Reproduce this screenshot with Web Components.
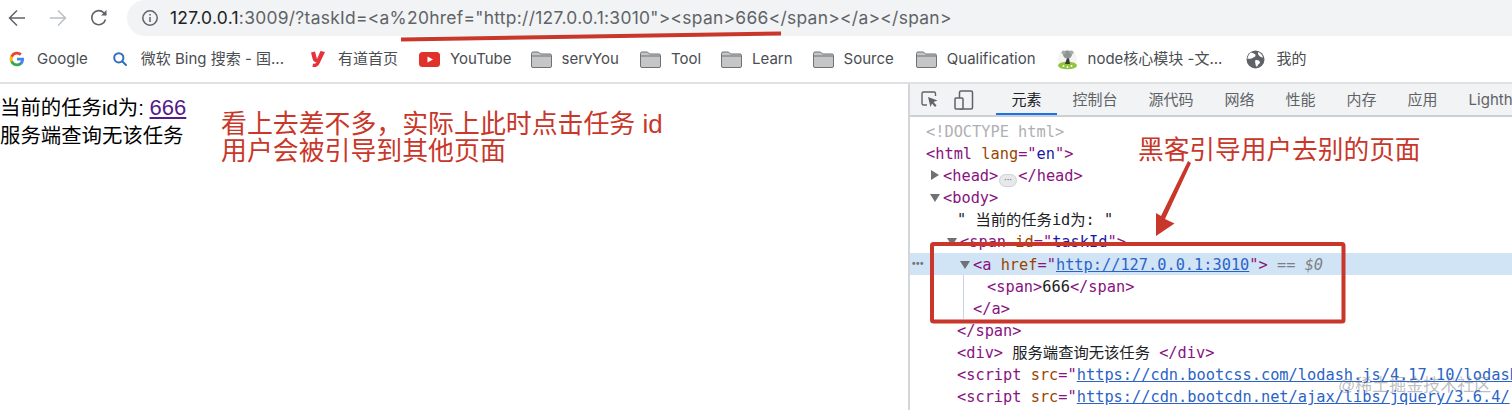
<!DOCTYPE html>
<html lang="zh-CN"><head><meta charset="utf-8"><title>XSS</title>
<style>
html,body{margin:0;padding:0;background:#fff}
body{width:1512px;height:410px;overflow:hidden;font-family:"Liberation Sans","Noto Sans CJK SC",sans-serif}
</style></head><body>
<screen-shot>
  <browser-toolbar></browser-toolbar>
  <bookmark-bar></bookmark-bar>
  <main-split></main-split>
</screen-shot>
<script>
const FONT='"Liberation Sans","Noto Sans CJK SC",sans-serif';
const UI='Inter,"Noto Sans CJK SC",sans-serif';
const MONO='"DejaVu Sans Mono","Noto Sans CJK SC",monospace';
function def(name,html,init){
  customElements.define(name,class extends HTMLElement{
    constructor(){super();const s=this.attachShadow({mode:'open'});s.innerHTML=typeof html==='function'?html(this):html;}
    connectedCallback(){if(init)init(this)}
  });
}
def('screen-shot',`<style>:host{display:block;position:relative;width:1512px;height:410px;overflow:hidden;background:#fff}
svg{position:absolute;left:0;top:0;pointer-events:none}
.n{position:absolute;color:#c8372a;font:25.900px/27px ${FONT};white-space:nowrap}
.a1{left:221px;top:111px}.a2{left:1138px;top:137px;font-size:25.7px}
.wm{position:absolute;left:1338px;top:376px;color:rgba(120,125,135,.5);font:17px/20px ${FONT};white-space:nowrap}
</style><slot></slot>
<div class="n a1">看上去差不多，实际上此时点击任务 id<br>用户会被引导到其他页面</div>
<div class="n a2">黑客引导用户去别的页面</div>
<div class="wm">@稀土掘金技术社区</div>
<svg width="1512" height="410" viewBox="0 0 1512 410">
<path d="M401 37.500L781 31.500V35.500L401 41.500Z" fill="#c8372a"/>
<path d="M1188 161L1191 163L1165 219L1174.500 223.500L1156 236L1156 213L1161 216Z" fill="#c8372a"/>
<rect x="932" y="244" width="411.500" height="77.500" rx="1.500" fill="none" stroke="#c8372a" stroke-width="4"/>
</svg>`);
def('browser-toolbar',`<style>:host{display:flex;align-items:center;height:36px;background:#fff}
.nav{flex:none;width:127px;display:flex;align-items:center;padding-left:6.500px;gap:21px;box-sizing:border-box}
.omni{flex:1;height:36px;background:#f1f3f4;border-radius:18px 0 0 18px;display:flex;align-items:center;padding-left:14px;gap:11px;color:#5f6368;font:17.400px/36px ${UI};letter-spacing:.3px;white-space:nowrap}
b{font-weight:400;color:#202124}svg{display:block;flex:none}
</style>
<div class="nav">
<svg width="20" height="20" viewBox="0 0 20 20" fill="none" stroke="#5f6368" stroke-width="1.500"><path d="M18 10H2.500M10 2.500L2.500 10L10 17.500"/></svg>
<svg width="20" height="20" viewBox="0 0 20 20" fill="none" stroke="#bcc0c4" stroke-width="1.500"><path d="M2 10H17.500M10 2.500L17.500 10L10 17.500"/></svg>
<svg width="20" height="20" viewBox="0 0 20 20" fill="none" stroke="#5f6368" stroke-width="1.600"><path d="M16.500 11.500A7 7 0 1 1 14.800 4.800L17 7"/><path d="M17.500 2V7.500H12" fill="#5f6368" stroke="none"/></svg>
</div>
<div class="omni">
<svg width="18" height="18" viewBox="0 0 18 18" fill="none" stroke="#5f6368" stroke-width="1.500"><circle cx="9" cy="9" r="7.200"/><path d="M9 8V13M9 5V6.500"/></svg>
<span><b>127.0.0.1</b>:3009/?taskId=&lt;a%20href="http://127.0.0.1:3010"&gt;&lt;span&gt;666&lt;/span&gt;&lt;/a&gt;&lt;/span&gt;</span>
</div>`);
const folder=`<svg width="21" height="17" viewBox="0 0 21 17"><path d="M.5 15V2.500A1.500 1.500 0 0 1 2 1H7.500L9.500 3H19A1.500 1.500 0 0 1 20.500 4.500V15A1.500 1.500 0 0 1 19 16.500H2A1.500 1.500 0 0 1 .5 15Z" fill="#c4c6c8" stroke="#6f7174"/><path d="M1 5H20" stroke="#6f7174"/></svg>`;
const icons={
g:`<svg width="16" height="16" viewBox="0 0 48 48"><path fill="#4285F4" d="M45 24.500c0-1.600-.1-3.100-.4-4.500H24v8.500h11.800a10 10 0 0 1-4.400 6.600v5.500h7.100C42.700 36.700 45 31.100 45 24.500z"/><path fill="#34A853" d="M24 46c5.900 0 10.900-2 14.500-5.300l-7.100-5.500c-2 1.300-4.500 2.100-7.400 2.100-5.700 0-10.500-3.800-12.300-9H4.400v5.700A22 22 0 0 0 24 46z"/><path fill="#FBBC05" d="M11.700 28.300a13 13 0 0 1 0-8.500v-5.700H4.400a22 22 0 0 0 0 19.900z"/><path fill="#EA4335" d="M24 10.700c3.200 0 6.100 1.100 8.400 3.300l6.300-6.300A22 22 0 0 0 4.400 14.100l7.300 5.700c1.800-5.200 6.600-9.100 12.300-9.100z"/></svg>`,
b:`<svg width="16" height="16" viewBox="0 0 16 16" fill="none" stroke="#2f6fc0" stroke-width="2"><circle cx="6.800" cy="6.800" r="4.600"/><path d="M10.200 10.200L14 14" stroke-linecap="round"/></svg>`,
y:`<svg width="16" height="18" viewBox="0 0 16 18"><path d="M1 2.500L5 1.500L7 9L10.500 1L15 2L9.500 13.500C8 16.500 5.500 17.500 2.500 17L3 13.500C5 14 6 13.500 6.500 12.500C4 12 3 10.500 2.500 8.500Z" fill="#e5333b"/></svg>`,
yt:`<svg width="21" height="15" viewBox="0 0 21 15"><rect width="21" height="15" rx="3.500" fill="#e0322b"/><path d="M8.500 4.500L14 7.500L8.500 10.500Z" fill="#fff"/></svg>`,
f:folder,
k:`<svg width="21" height="21" viewBox="0 0 21 21"><circle cx="10.500" cy="10" r="9.500" fill="#eef0ea" opacity=".7"/><ellipse cx="10.500" cy="16.500" rx="9.500" ry="3.800" fill="#8fc43c"/><path d="M8 15L10 9H12L13 15Z" fill="#3d3b33"/><ellipse cx="10.500" cy="5.500" rx="4.500" ry="4" fill="#8d9494"/><circle cx="6.500" cy="3.500" r="2" fill="#a6aaa8"/><circle cx="14.500" cy="3.500" r="2" fill="#a6aaa8"/><circle cx="6.500" cy="17" r="1" fill="#fff"/><circle cx="10.500" cy="18" r="1" fill="#fff"/><circle cx="14.500" cy="17" r="1" fill="#fff"/></svg>`,
w:`<svg width="19" height="19" viewBox="0 0 19 19"><circle cx="9.500" cy="9.500" r="9" fill="#5f6368"/><path d="M5 2.500C7 3.500 9 3 9.500 5C10 7 7.500 7 6.500 8C5 9.500 3 8 1.500 9C1.500 6.500 3 4 5 2.500ZM10 10C12 9.500 14 11 14 12.500C13.500 14 12 14 11.500 16C11 17.500 9.500 16 9.500 14C9 12 8.500 10.500 10 10ZM12.500 2C14.500 3 16.500 5 17 7.500C15.500 7.500 14 6.500 13 5.500C12 4.500 11.500 3 12.500 2Z" fill="#fff"/></svg>`
};
def('bookmark-item',(h)=>`<style>:host{display:flex;align-items:center;height:100%;margin-left:${h.getAttribute('ml')||21}px}
.i{flex:none;width:21px;display:flex;justify-content:center;margin-right:${h.getAttribute('gap')||10}px}svg{display:block}
</style><span class="i">${icons[h.getAttribute('icon')]}</span><slot></slot>`);
def('bookmark-bar',`<style>:host{display:flex;align-items:center;height:48px;box-sizing:border-box;padding:1px 0 1px 6px;color:#4a4d51;font:15px/44px ${UI};white-space:nowrap;border-bottom:2px solid #dfe1e3}
</style>
<bookmark-item ml="0" icon="g">Google</bookmark-item>
<bookmark-item ml="22" icon="b">微软 Bing 搜索 - 国...</bookmark-item>
<bookmark-item ml="23" icon="y">有道首页</bookmark-item>
<bookmark-item ml="21" icon="yt">YouTube</bookmark-item>
<bookmark-item ml="19" icon="f">servYou</bookmark-item>
<bookmark-item ml="21" icon="f">Tool</bookmark-item>
<bookmark-item ml="20" icon="f">Learn</bookmark-item>
<bookmark-item ml="20" icon="f">Source</bookmark-item>
<bookmark-item ml="22" icon="f">Qualification</bookmark-item>
<bookmark-item ml="21" icon="k">node核心模块 -文...</bookmark-item>
<bookmark-item ml="23" icon="w">我的</bookmark-item>`);
def('page-pane',`<style>:host{display:block;width:908px;flex:none;padding-top:10px;color:#000;font:20.400px/28px ${FONT};white-space:nowrap}
a{color:#551a8b;text-decoration:underline;font-size:22px}</style>
<div>当前的任务id为: <a>666</a></div><div>服务端查询无该任务</div>`);
def('dev-tabs',`<style>:host{display:flex;align-items:center;height:33px;box-sizing:border-box;background:#f1f3f4;border-bottom:2px solid #cdd0d3;color:#5f6368;font:15px/31px ${UI};white-space:nowrap;overflow:hidden}
.tools{flex:none;width:86px;display:flex;align-items:center;height:100%;padding-left:11px;gap:16px;box-sizing:border-box}
.sep{width:1px;height:22px;background:#cfd2d5;margin-left:13px}
.t{flex:none;padding:0 15.500px;height:31px;box-sizing:border-box}
.t.on{color:#202124;box-shadow:inset 0 -2px 0 #1a73e8}
svg{display:block;flex:none}</style>
<div class="tools">
<svg width="17" height="17" viewBox="0 0 17 17" fill="none" stroke="#5f6368" stroke-width="1.400"><path d="M6 14H2.500A1.500 1.500 0 0 1 1 12.500V2.500A1.500 1.500 0 0 1 2.500 1H13A1.500 1.500 0 0 1 14.500 2.500V5"/><path d="M7 6L16.500 9.500L12.500 11L15.500 14.500L14 16L11 12.500L9.500 16Z" fill="#5f6368" stroke="none"/></svg>
<svg width="20" height="20" viewBox="0 0 20 20" fill="none" stroke="#5f6368" stroke-width="1.500"><rect x="5.500" y="1" width="13" height="18" rx="1.500"/><rect x="1" y="8" width="8" height="11" rx="1" fill="#f1f3f4"/></svg>
<span class="sep"></span></div>
<span class="t on">元素</span><span class="t">控制台</span><span class="t">源代码</span><span class="t">网络</span><span class="t">性能</span><span class="t">内存</span><span class="t">应用</span><span class="t">Lighthouse</span>`);
def('dom-line',(h)=>`<style>:host{display:block;height:22.100px;padding-left:${h.getAttribute('x')}px;position:relative;box-sizing:border-box;white-space:pre}
:host([sel]){background:#d1e4f6}
.ar{position:absolute;top:8px;left:${h.getAttribute('x')-13}px;width:0;height:0}
.d{border-left:5px solid transparent;border-right:5px solid transparent;border-top:8px solid #6e7175}
.r{border-top:5px solid transparent;border-bottom:5px solid transparent;border-left:8px solid #6e7175;left:${h.getAttribute('x')-12}px;top:6px}
</style>${h.hasAttribute('arrow')?`<span class="ar ${h.getAttribute('arrow')}"></span>`:''}<slot></slot>`);
const T=s=>`<i class="t">${s.replace(/</g,'&lt;').replace(/>/g,'&gt;')}</i>`;
const A=s=>`<i class="n">${s}</i>`;
const V=s=>`<i class="v">${s}</i>`;
def('dev-tools',`<style>:host{display:block;flex:1;min-width:0;box-sizing:border-box;border-left:2px solid #d3d5d8;color:#202124;overflow:hidden;height:326px}
.tree{font:15.300px/24.100px ${MONO};padding-top:3px;position:relative}
i{font-style:normal}.t{color:#881280}.n{color:#994500}.v{color:#1a1aa6}.l{color:#2a63c8;text-decoration:underline}.c{color:#aeb0b3}.g{color:#7c7f83}
.e{font-style:italic}
.guide{position:absolute;left:53px;top:158px;width:1px;height:44px;background:#c8d3e3}
.dots{position:absolute;left:2px;top:3px;color:#72767a;font:700 10px/16px ${FONT};letter-spacing:.5px}
.pill{display:inline-block;vertical-align:-1px;width:18px;height:13px;border-radius:7px;background:#e6e8ea;border:1px solid #cfd2d5;box-sizing:border-box;margin:0 1px;text-align:center;font:700 8px/10px ${FONT};color:#777}
</style>
<dev-tabs></dev-tabs>
<div class="tree">
<dom-line x="16"><i class="c">&lt;!DOCTYPE html&gt;</i></dom-line>
<dom-line x="16">${T('<html')} ${A('lang')}${T('=')}<i class="t">"</i>${V('en')}<i class="t">"</i>${T('>')}</dom-line>
<dom-line x="33" arrow="r">${T('<head>')}<span class="pill">···</span>${T('</head>')}</dom-line>
<dom-line x="33" arrow="d">${T('<body>')}</dom-line>
<dom-line x="47">" 当前的任务id为: "</dom-line>
<dom-line x="50" arrow="d">${T('<span')} ${A('id')}${T('=')}<i class="t">"</i>${V('taskId')}<i class="t">"</i>${T('>')}</dom-line>
<dom-line x="63" arrow="d" sel><span class="dots">•••</span>${T('<a')} ${A('href')}${T('=')}<i class="t">"</i><i class="l">http://127.0.0.1:3010</i><i class="t">"</i>${T('>')} <i class="g">== <i class="e">$0</i></i></dom-line>
<dom-line x="77">${T('<span>')}666${T('</span>')}</dom-line>
<dom-line x="63">${T('</a>')}</dom-line>
<dom-line x="47">${T('</span>')}</dom-line>
<dom-line x="47">${T('<div>')} 服务端查询无该任务 ${T('</div>')}</dom-line>
<dom-line x="47">${T('<script')} ${A('src')}${T('=')}<i class="t">"</i><i class="l">https://cdn.bootcss.com/lodash.js/4.17.10/lodash</i></dom-line>
<dom-line x="47">${T('<script')} ${A('src')}${T('=')}<i class="t">"</i><i class="l">https://cdn.bootcdn.net/ajax/libs/jquery/3.6.4/</i></dom-line>
<span class="guide"></span>
</div>`);
def('main-split',`<style>:host{display:flex;height:326px;overflow:hidden}</style><page-pane></page-pane><dev-tools></dev-tools>`);
</script>
</body></html>
